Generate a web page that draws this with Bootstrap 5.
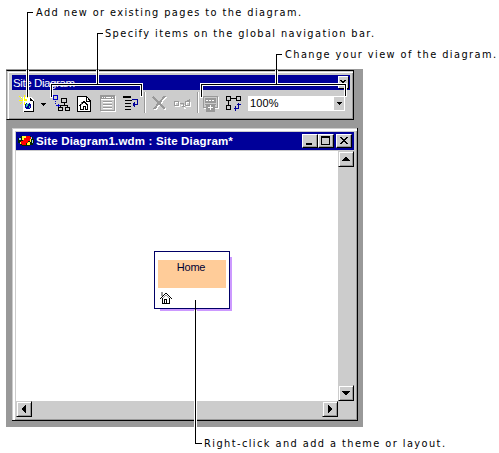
<!DOCTYPE html>
<html lang="en">
<head>
<meta charset="utf-8">
<meta name="viewport" content="width=device-width, initial-scale=1">
<title>Site Diagram</title>
<link href="https://cdn.jsdelivr.net/npm/bootstrap@5.3.0/dist/css/bootstrap.min.css" rel="stylesheet">
<style>
body{width:499px;height:453px;background:#fff;font:11px/15px "Liberation Sans",Arial,sans-serif;color:#000}
svg{display:block;shape-rendering:crispEdges;flex:none}
.workspace{width:357px;height:358px;margin:69px 0 0 6px;background:#999}
.toolpane{width:348px;height:50px;background:#ccc;border-top:1px solid #000;border-right:1px solid #000;border-bottom:1px solid #000;border-left:1px solid #999;box-shadow:inset 1px 1px #ccc,inset 2px 2px #fff,inset -1px -1px #999;padding:4px 3px 0 5px;margin-top:1px}
.toolcap{height:15px;width:338px;background:#009;color:#fff;padding-left:1px}
.toolcap .cap{font-size:11.5px;letter-spacing:-.4px;line-height:17px}
.caret-btn{width:10px;height:12px;background:#ccc;box-shadow:inset 1px 1px #fff,1px 1px #000;margin:1px 2px 0 0}
.iconrow{height:28px;padding:5px 0 0 7px}
.ic-caret{margin-left:6px}
.ic-tree{margin-left:7px}
.ic-home{margin-left:7px}
.ic-banner{margin-left:9px}
.ic-indent{margin-left:7px}
.ic-del{margin-left:6px}
.ic-link{margin-left:6px}
.ic-sub{margin-left:4px}
.ic-rot{margin-left:7px}
.sep{width:2px;height:21px;background:#999;border-right:1px solid #fff;flex:none;margin:-3px 0 0 5px}
.ic-link + .sep{margin-left:6px}
.zoombox{width:97px;height:15px;margin:1px 0 0 6px;background:#fff;padding-right:1px;flex:none}
.zoombox .val{padding-left:2px;letter-spacing:.1px}
.dropbtn{width:10px;height:13px;margin-top:1px;background:#ccc}
.docwin{width:346px;height:293px;margin:8px 0 0 6px;background:#ccc;border-right:1px solid #000;border-bottom:1px solid #000;box-shadow:inset 1px 1px #ccc,inset 3px 3px #fff,inset -1px -1px #999;padding:4px 3px 3px 4px}
.doccap{height:18px;width:338px;background:#009;color:#fff;padding:0 2px 0 2px}
.doccap .cap{font-weight:bold;font-size:11.5px;letter-spacing:.18px;line-height:18px;margin-left:2px}
.wbtn{width:16px;height:14px;background:#ccc;border:1px solid;border-color:#fff #000 #000 #fff;box-shadow:inset -1px -1px #999}
.wclose{margin-left:2px}
.pane{margin-top:1px;height:250px;width:338px}
.canvas{width:322px;background:#fff;padding:100px 0 0 138px}
.vscroll{width:16px;background:#ccc}
.sbtn{width:16px;height:16px;background:#ccc;border:1px solid;border-color:#ccc #000 #000 #ccc;box-shadow:inset 1px 1px #fff,inset -1px -1px #999}
.hscroll{width:322px;height:16px}
.node{width:76px;height:58px;border:1px solid #006;background:#fff;padding:8px 3px 0}
.nodewrap{width:78px;height:60px;background:linear-gradient(#c9f,#c9f) 6px 6px/72px 54px no-repeat}
.nodename{height:28px;background:#fc9;color:#003;text-align:center;padding-right:2px;letter-spacing:-.2px}
.homeicon{margin:4px 0 0 2px}
.callouts{left:0;top:0;pointer-events:none}
.callouts text{font-family:"DejaVu Sans",Verdana,sans-serif;font-size:9.8px}
</style>
<script src="https://cdn.jsdelivr.net/npm/bootstrap@5.3.0/dist/js/bootstrap.bundle.min.js"></script>
</head>
<body class="overflow-hidden position-relative">
<div class="d-flex">
<main class="workspace">
 <section class="toolpane">
  <div class="toolcap d-flex justify-content-between"><span class="cap">Site Diagram</span>
   <span class="caret-btn"><svg width="10" height="12"><path d="M2 4h2v1h2V4h2v1H7v1H6v1H4V6H3V5H2z"/></svg></span></div>
  <div class="iconrow d-flex align-items-start">
   <!-- new page -->
   <svg width="16" height="17"><path d="M4 2h8l3 3v12H4z" fill="#fff"/><path d="M11 3h1v1h1v1h1v1h1v11H5v-1h9V6h-3z"/><path d="M0 1h1v1H0zM2 3h1v1H2zM1 2h1v1H1zM5 0h1v4H5zM9 1h1v1H9zM8 2h1v1H8zM3 4h5v2H3zM0 5h3v1H0zM2 7h1v1H2zM1 8h1v1H1zM5 7h1v3H5z" fill="#ff0"/><path d="M2 2h1v1H2zM4 3h1v3H4zM7 3h1v1H7z" fill="#fff"/><path d="M7 8h4v1h1v4h-1v1H7v-1H6V9h1z" fill="#009"/><path d="M7 9h2v2H8v1H7zM10 11h1v2h-1z" fill="#3c9"/><path d="M8 8h2v1H8z" fill="#9ff"/></svg>
   <svg class="ic-caret" width="5" height="17"><path d="M0 8h5v1H4v1H3v1H2v-1H1V9H0z"/></svg>
   <!-- tree -->
   <svg width="17" height="17" class="ic-tree"><path d="M.5.5h4v4h-4zM2.500 6v1M2.500 8v1M3 10.500h4M5.500 8.500v4" fill="none" stroke="#00c"/><path d="M8.500 3.500h5v4h-5zM5.500 12.500h4v3h-4zM12.500 12.500h4v3h-4zM11.500 8v2.500M7.500 12v-1.500h7V12" fill="none" stroke="#000"/></svg>
   <!-- home page -->
   <svg width="14" height="17" class="ic-home"><path d="M.5 1.500h9l3.500 4v11H.5z" fill="#fff" stroke="#000"/><path d="M9.500 2v4h3M2 10.500h1v-1h1v-1h1v-1h1v-1h1v1h1v1h1v1h1v1h1M3.500 10v4.500h7V10" fill="none" stroke="#000"/><path d="M4 7h1v3H4z" fill="#777"/><path d="M6 11h3v4H6z"/><path d="M7 12h1v3H7z" fill="#fff"/></svg>
   <!-- banner -->
   <svg width="16" height="17" class="ic-banner"><path d="M1 1h15v16H1z" fill="#fff"/><path d="M.5.5h14v15H.5z" fill="#ccc" stroke="#999"/><path d="M1 1h13v3H1zM3 6h9v1H3zM3 9h9v1H3zM3 12h9v1H3z" fill="#999"/><path d="M2 2h1v1H2zM4 2h1v1H4zM6 2h5v1H6zM12 2h1v1h-1zM1 4h13v1H1zM3 7h9v1H3zM3 10h9v1H3zM3 13h9v1H3z" fill="#fff"/></svg>
   <!-- indent -->
   <svg width="16" height="17" class="ic-indent"><path d="M0 1h8v2H0zM2 5h7v1H2zM2 8h6v1H2zM2 11h6v1H2zM2 14h6v1H2z"/><path d="M9 4.500h5.500v5H10M11.500 7v5" stroke="#009" fill="none"/><path d="M10 8h1v3h-1z" fill="#009"/></svg>
   <span class="sep"></span>
   <!-- delete -->
   <svg width="16" height="17" class="ic-del"><path d="M2 3l12 12M14 2L3 15" stroke="#fff" stroke-width="2"/><path d="M1 2l12 12M13 1L2 14" stroke="#999" stroke-width="2"/></svg>
   <!-- external link -->
   <svg width="17" height="17" class="ic-link"><path d="M1.500 7.500h4v4h-4zM12.500 7.500h4v4h-4zM7 10h3v3h2" fill="none" stroke="#fff"/><path d="M.5 6.500h4v4h-4zM11.500 6.500h4v4h-4zM6 8.500h4M7.500 11.500h3M9.500 8v3M13 5.500h3M15.500 4v4" fill="none" stroke="#999"/></svg>
   <span class="sep"></span>
   <!-- add subtree -->
   <svg width="16" height="18" class="ic-sub"><path d="M1 2h15v12H1z" fill="#fff"/><path d="M.5 1.500h14v11H.5z" fill="#ccc" stroke="#999"/><path d="M2 3h11v5H2zM2 9h11v1H2zM3 9h9v8H3z" fill="#999"/><path d="M3 5h2v1H3zM6 5h2v1H6zM9 5h2v1H9zM7 10h1v5H7zM5 12h5v1H5z" fill="#fff"/></svg>
   <!-- rotate -->
   <svg width="16" height="17" class="ic-rot"><path d="M.5 1.500h4v4h-4zM10.500 1.500h4v4h-4zM.5 10.500h4v4h-4zM5 3.500h5M2.500 6v4" fill="none" stroke="#000"/><path d="M12.500 8v5.500H8M11 9.500h4M9.500 11v5" stroke="#009" fill="none"/></svg>
   <div class="zoombox d-flex justify-content-between"><span class="val">100%</span><span class="dropbtn"><svg width="10" height="13"><path d="M3 5h5v1H7v1H6v1H5V7H4V6H3z"/></svg></span></div>
  </div>
 </section>
 <section class="docwin">
  <div class="doccap d-flex align-items-center">
   <svg width="16" height="12"><path d="M3 1h10v1h2v2h1v4h-1v2h-3v1H4v-1H2V8H0V3h2V2h1z" fill="#020"/><path d="M4 1h4v2H6v2H4zM2 7h2v2H2zM9 7h3v3H9zM12 3h1v4h-1z" fill="#ff3"/><path d="M1 3h2v2H1zM13 2h1v2h-1zM14 5h1v3h-1z" fill="#9cf"/><path d="M8 1h4v1h1v2h-1v2h-2v2H8v2H4V9H3V6h2V5h1V3h2z" fill="#f00"/></svg>
   <span class="cap me-auto">Site Diagram1.wdm : Site Diagram*</span>
   <span class="wbtn"><svg width="14" height="12"><path d="M3 8h6v2H3z"/></svg></span>
   <span class="wbtn"><svg width="14" height="12"><path d="M2 1h9v9H2zM3 3v6h7V3z" fill-rule="evenodd"/></svg></span>
   <span class="wbtn wclose"><svg width="14" height="12"><path d="M3 2h2v1h1v1h2V3h1V2h2v1h-1v1H9v1H8v1h1v1h1v1h1v1H9V8H8V7H6v1H5v1H3V8h1V7h1V6h1V5H5V4H4V3H3z"/></svg></span>
  </div>
  <div class="pane d-flex">
   <div class="canvas"><div class="nodewrap"><div class="node"><div class="nodename">Home</div>
    <svg class="homeicon" width="12" height="13"><path d="M2 6l4-4 4 4v5H2z" fill="#fff"/><path d="M5 1h1v1H5zM6 1h1v1H6zM7 2h1v1H7zM8 3h1v1H8zM9 4h1v1H9zM10 5h1v1h-1zM11 6h1v1h-1zM4 2h1v1H4zM3 3h1v1H3zM2 4h1v1H2zM1 5h1v1H1zM0 6h1v1H0zM2 6h1v6H2zM9 6h1v6H9zM2 11h8v1H2zM4 7h3v4H4z"/><path d="M5 8h1v3H5z" fill="#fff"/><path d="M1 0h2v4H1zM5 3h2v1H5zM4 4h1v1H4zM7 4h1v1H7zM3 5h1v1H3zM8 5h1v1H8z" fill="#999"/></svg></div></div></div>
   <div class="vscroll d-flex flex-column justify-content-between">
    <span class="sbtn"><svg width="14" height="14"><path d="M6 5h2v1h1v1h1v1h1v1H3V8h1V7h1V6h1z"/></svg></span>
    <span class="sbtn"><svg width="14" height="14"><path d="M3 5h8v1h-1v1H9v1H8v1H6V8H5V7H4V6H3z"/></svg></span>
   </div>
  </div>
  <div class="hscroll d-flex justify-content-between">
   <span class="sbtn"><svg width="14" height="14"><path d="M9 3v8H8v-1H7V9H6V8H5V6h1V5h1V4h1V3z"/></svg></span>
   <span class="sbtn"><svg width="14" height="14"><path d="M5 3v8h1v-1h1V9h1V8h1V6H8V5H7V4H6V3z"/></svg></span>
  </div>
 </section>
</main>
</div>
<!-- callout lines and captions -->
<svg class="callouts position-absolute" width="499" height="453">
 <g fill="none" stroke="#fff" stroke-width="3"><path d="M27.500 70v27M97.500 70v14M51.500 98V84.500h90V97M276.500 70v14M201.500 98V84.500h144V97M195.500 310v117"/></g>
 <g fill="none" stroke="#000"><path d="M33 12.500h-5.500V97M103 33.500h-5.500v51M51.500 97V84.500h90V96M282 54.500h-5.500v30M201.500 97V84.500h144V96M195.500 300v143.500h6"/></g>
 <text x="36" y="15.500" textLength="265">Add new or existing pages to the diagram.</text>
 <text x="105" y="36.500" textLength="269">Specify items on the global navigation bar.</text>
 <text x="285" y="57.500" textLength="211">Change your view of the diagram.</text>
 <text x="204" y="446.500" textLength="241">Right-click and add a theme or layout.</text>
</svg>
</body>
</html>
